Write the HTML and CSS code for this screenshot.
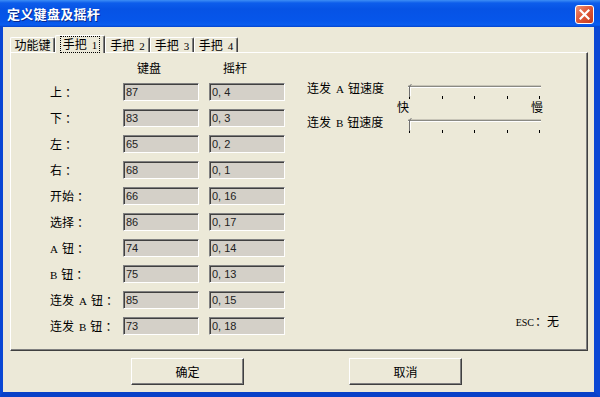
FILE: index.html
```html
<!DOCTYPE html>
<html lang="zh">
<head>
<meta charset="utf-8">
<title>定义键盘及摇杆</title>
<link rel="stylesheet" href="styles.css">
</head>
<body>
<div class="window">
  <div class="titlebar">
    <span class="title">定义键盘及摇杆</span>
    <div class="close">
      <svg width="11" height="11" viewBox="0 0 11 11"><path d="M1.5 1.5 L9.5 9.5 M9.5 1.5 L1.5 9.5" stroke="#fff" stroke-width="2.2" stroke-linecap="square" fill="none"/></svg>
    </div>
  </div>
  <div class="frame">
    <div class="tabs">
      <div class="tab t1">功能键</div>
      <div class="tab active"><span class="focus">手把<span class="lat">1</span></span></div>
      <div class="tab t3">手把<span class="lat">2</span></div>
      <div class="tab t4">手把<span class="lat">3</span></div>
      <div class="tab t5">手把<span class="lat">4</span></div>
    </div>
    <div class="panel">
      <div class="keys">
        <div></div><div class="head">键盘</div><div class="head">摇杆</div>
        <div class="lbl">上<span class="colon">：</span></div><div class="box">87</div><div class="box">0, 4</div>
        <div class="lbl">下<span class="colon">：</span></div><div class="box">83</div><div class="box">0, 3</div>
        <div class="lbl">左<span class="colon">：</span></div><div class="box">65</div><div class="box">0, 2</div>
        <div class="lbl">右<span class="colon">：</span></div><div class="box">68</div><div class="box">0, 1</div>
        <div class="lbl">开始<span class="colon">：</span></div><div class="box">66</div><div class="box">0, 16</div>
        <div class="lbl">选择<span class="colon">：</span></div><div class="box">86</div><div class="box">0, 17</div>
        <div class="lbl"><span class="lat first">A</span>钮<span class="colon">：</span></div><div class="box">74</div><div class="box">0, 14</div>
        <div class="lbl"><span class="lat first">B</span>钮<span class="colon">：</span></div><div class="box">75</div><div class="box">0, 13</div>
        <div class="lbl">连发<span class="lat">A</span>钮<span class="colon">：</span></div><div class="box">85</div><div class="box">0, 15</div>
        <div class="lbl">连发<span class="lat">B</span>钮<span class="colon">：</span></div><div class="box">73</div><div class="box">0, 18</div>
      </div>
      <div class="side">
        <div class="speed">
          <span class="slabel">连发<span class="lat">A</span>钮速度</span>
          <div class="slider">
            <div class="track"></div>
            <svg class="thumb" width="4" height="13" viewBox="0 0 4 13"><path d="M1.5 13 V3 Q1.5 1 3.5 0.5" stroke="#6f6f6f" stroke-width="1" fill="none"/><path d="M2.5 12 V4" stroke="#fff" stroke-width="1"/></svg>
            <div class="ticks"><i></i><i></i><i></i><i></i><i></i></div>
          </div>
        </div>
        <div class="scale"><span>快</span><span>慢</span></div>
        <div class="speed">
          <span class="slabel">连发<span class="lat">B</span>钮速度</span>
          <div class="slider">
            <div class="track"></div>
            <svg class="thumb" width="4" height="13" viewBox="0 0 4 13"><path d="M1.5 13 V3 Q1.5 1 3.5 0.5" stroke="#6f6f6f" stroke-width="1" fill="none"/><path d="M2.5 12 V4" stroke="#fff" stroke-width="1"/></svg>
            <div class="ticks"><i></i><i></i><i></i><i></i><i></i></div>
          </div>
        </div>
        <div class="esc"><span class="lat esc-l">ESC</span><span class="colon">：</span>无</div>
      </div>
    </div>
    <div class="buttons">
      <div class="btn">确定</div>
      <div class="btn">取消</div>
    </div>
  </div>
</div>
</body>
</html>
```
FILE: styles.css
```css
html, body {
  margin: 0;
  padding: 0;
}
body {
  width: 600px;
  height: 397px;
  overflow: hidden;
  background: #ECE9D8;
  font-family: "Noto Sans CJK SC", "Noto Sans CJK JP", sans-serif;
  font-size: 12px;
  color: #000;
}
.window {
  display: flex;
  flex-direction: column;
  width: 600px;
  height: 397px;
}
.titlebar {
  flex: none;
  height: 27px;
  box-sizing: border-box;
  display: flex;
  align-items: center;
  justify-content: space-between;
  padding: 0 6px 0 7px;
  background: linear-gradient(#3D8EF5 0, #0D5DEB 3px, #0653E5 9px, #0656EA 21px, #0A5DEF 25px, #0443CC 27px);
}
.title {
  color: #fff;
  font-weight: bold;
  font-size: 13px;
  letter-spacing: 0.3px;
  text-shadow: 1px 1px 0 #0A2A8E;
}
.close {
  width: 19px;
  height: 19px;
  box-sizing: border-box;
  border: 1px solid #fff;
  border-radius: 3px;
  background: linear-gradient(135deg, #EE9377 0%, #E05A3A 45%, #C63A1E 100%);
  display: flex;
  align-items: center;
  justify-content: center;
  margin-top: 1px;
}
.frame {
  flex: 1;
  display: flex;
  flex-direction: column;
  background: #ECE9D8;
  border-left: 3px solid #0A47D4;
  border-right: 6px solid #0A47D4;
  border-bottom: 5px solid #0841C8;
  padding: 8px 6px 7px 7px;
  min-height: 0;
}
.lat {
  font-family: "Liberation Serif", serif;
  font-size: 11px;
  margin: 0 4px 0 5px;
}
.lat.first {
  margin-left: 0;
}
.colon {
  display: inline-block;
  margin-left: 3px;
}
/* tabs */
.tabs {
  flex: none;
  height: 17px;
  display: flex;
  align-items: flex-end;
}
.tab {
  position: relative;
  box-sizing: border-box;
  height: 15px;
  width: 44px;
  text-align: center;
  line-height: 14px;
  border-top: 1px solid #fff;
  border-left: 1px solid #fff;
  border-right: 1px solid #404040;
  box-shadow: inset -1px 0 0 #808080;
  border-radius: 2px 2px 0 0;
  background: #ECE9D8;
  white-space: nowrap;
}
.tab .lat {
  margin: 0 0 0 5px;
}
.tab.t1 { width: 45px; }
.tab.t3 { width: 45px; }
.tab.active {
  width: 50px;
  height: 18px;
  margin-bottom: -1px;
  z-index: 2;
  line-height: 16px;
}
.focus {
  display: inline-block;
  outline: 1px dotted #000;
  line-height: 13px;
  padding: 0 2px;
  margin-top: 1px;
}
/* panel */
.panel {
  flex: 1;
  display: flex;
  border-top: 1px solid #fff;
  border-left: 1px solid #fff;
  border-right: 1px solid #404040;
  border-bottom: 1px solid #404040;
  box-shadow: inset -1px -1px 0 #808080;
  min-height: 0;
}
.keys {
  flex: none;
  display: grid;
  grid-template-columns: 63px 76px 76px;
  grid-template-rows: 15px repeat(10, 18px);
  column-gap: 10px;
  row-gap: 8px;
  padding: 7px 0 0 39px;
  align-content: start;
}
.head {
  padding-left: 14px;
  line-height: 15px;
}
.lbl {
  line-height: 18px;
  white-space: nowrap;
}
.box {
  box-sizing: border-box;
  height: 18px;
  background: #D4D0C8;
  border-top: 1px solid #808080;
  border-left: 1px solid #808080;
  border-bottom: 1px solid #fff;
  border-right: 1px solid #fff;
  box-shadow: inset 1px 1px 0 #404040;
  padding-left: 2px;
  line-height: 16px;
  font-family: "Liberation Sans", sans-serif;
  font-size: 11px;
  color: #222;
}
/* right side */
.side {
  flex: 1;
  display: flex;
  flex-direction: column;
  padding: 27px 28px 19px 22px;
}
.speed {
  display: flex;
  height: 18px;
}
.slabel {
  width: 101px;
  line-height: 16px;
  white-space: nowrap;
}
.slider {
  position: relative;
  width: 133px;
  height: 18px;
}
.track {
  margin-top: 6px;
  height: 1px;
  background: #8A8A84;
  border-bottom: 1px solid #FFFFFF;
  box-shadow: 0 -1px 0 #C8C5B8;
}
.thumb {
  position: absolute;
  left: 0;
  top: 4px;
}
.ticks {
  display: flex;
  justify-content: space-between;
  padding: 0 1px;
  margin-top: 8px;
}
.ticks i {
  display: block;
  width: 1px;
  height: 3px;
  background: #000;
}
.scale {
  display: flex;
  justify-content: space-between;
  width: 146px;
  margin-left: 90px;
  height: 16px;
  line-height: 18px;
}
.esc {
  margin-top: auto;
  align-self: flex-end;
  line-height: 16px;
  white-space: nowrap;
}
.lat.esc-l {
  margin: 0;
  font-size: 10px;
}
.esc .colon {
  margin-left: 1px;
}
/* buttons */
.buttons {
  flex: none;
  display: flex;
  gap: 105px;
  margin-top: 7px;
  padding-left: 121px;
}
.btn {
  box-sizing: border-box;
  width: 113px;
  height: 27px;
  display: flex;
  align-items: center;
  justify-content: center;
  border-top: 1px solid #fff;
  border-left: 1px solid #fff;
  border-right: 1px solid #404040;
  border-bottom: 1px solid #404040;
  box-shadow: inset -1px -1px 0 #808080;
  background: #ECE9D8;
}
```
